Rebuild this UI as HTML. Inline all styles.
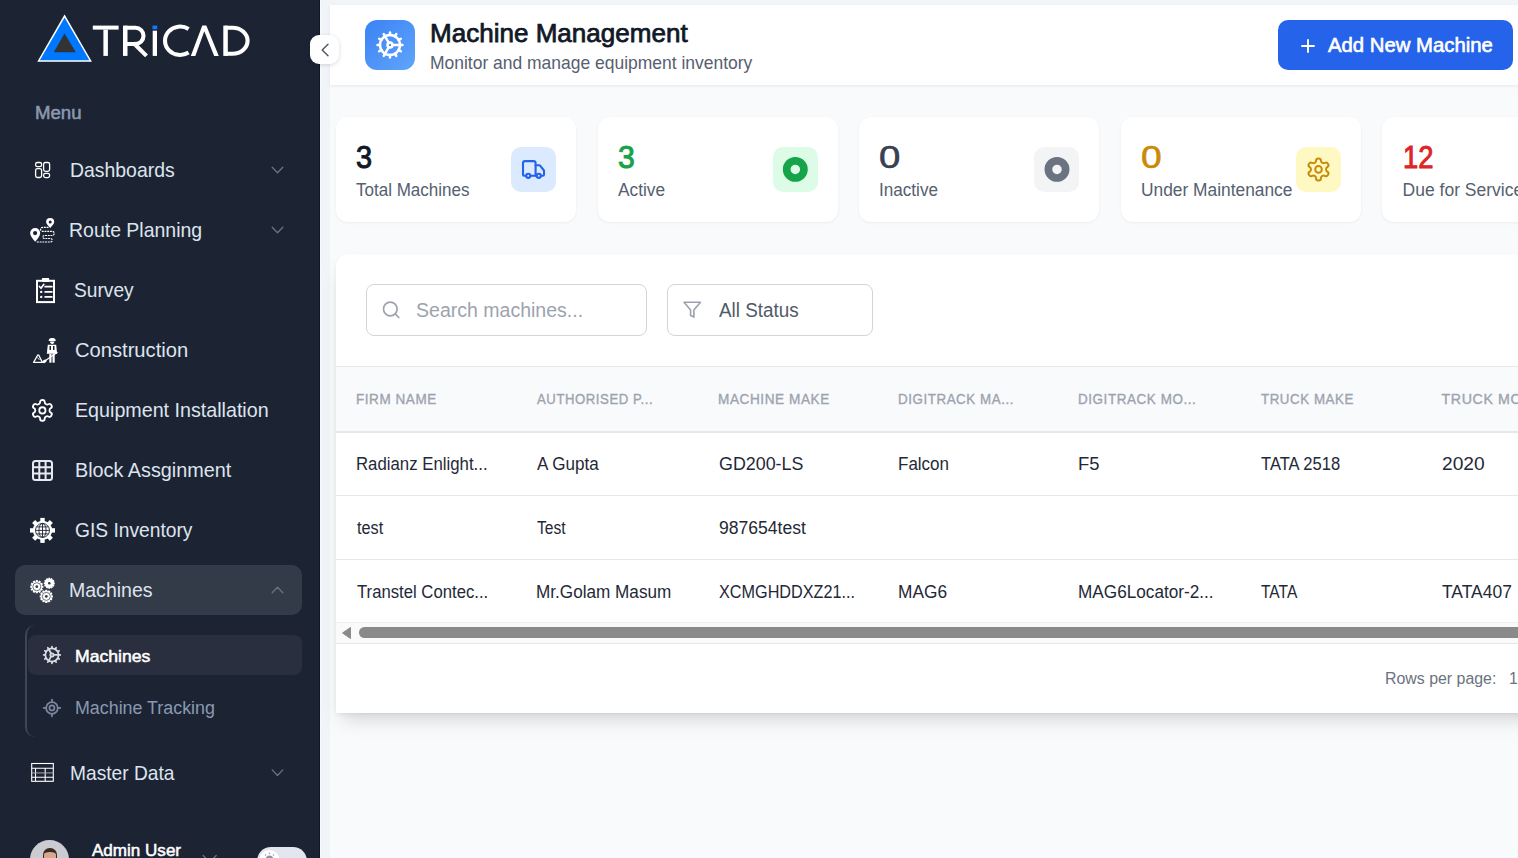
<!DOCTYPE html>
<html><head><meta charset="utf-8"><style>
html,body{margin:0;padding:0;width:1518px;height:858px;overflow:hidden;background:#F1F5F9;font-family:"Liberation Sans",sans-serif}
.t{position:absolute;white-space:nowrap;line-height:1;transform-origin:0 0}
#sb{position:absolute;left:0;top:0;width:320px;height:858px;background:#1C2434;overflow:hidden;box-shadow:inset -1px 0 0 #111827}
#main{position:absolute;left:330px;top:5px;width:1200px;height:900px;background:#f8fafc}
#hdr{position:absolute;left:330px;top:5px;width:1200px;height:80px;background:#fff;box-shadow:0 1px 3px rgba(0,0,0,.08)}
.card{position:absolute;background:#fff;border-radius:12px;box-shadow:0 1px 3px rgba(0,0,0,.06)}
</style></head><body>
<div id="sb">
<svg style="position:absolute;left:0;top:0" width="320" height="80" viewBox="0 0 320 80">
<polygon points="64.6,16 38.6,60.9 90.6,60.9" fill="#0077ff" stroke="#fff" stroke-width="1.5" stroke-linejoin="miter"/>
<polygon points="64.5,33.4 53.8,52.3 75.8,52.3" fill="#333"/>
<g fill="#fff">
<rect x="92.8" y="25.6" width="25.8" height="4"/>
<rect x="103.4" y="29.6" width="4.5" height="26.3"/>
<rect x="123" y="25.6" width="4.5" height="30.3"/>
<rect x="152.7" y="30.7" width="4.3" height="25.2"/>
<rect x="223.3" y="25.6" width="4.5" height="30.3"/>
</g>
<rect x="152.5" y="25.6" width="4.7" height="3.6" fill="#0a7cff"/>
<g fill="none" stroke="#fff" stroke-width="4.1">
<path d="M125,27.75 H135.5 A8,8.1 0 0 1 135.5,43.95 H125"/>
<path d="M133.5,43 L146.5,55.9"/>
<path d="M188.6,28.9 A15.2,14.2 0 1 0 188.6,52.6"/>
<path d="M225,27.75 H232.5 A15,12.95 0 0 1 232.5,53.75 H225"/>
</g>
<polygon points="190.8,55.9 202.3,25.6 206.3,25.6 218.8,55.9 214.2,55.9 204.3,31.2 195.3,55.9" fill="#fff"/>
</svg>
<div id="t0" class="t" style="left:34.55px;top:105.00px;font-size:17.5px;color:#8A99AF;font-weight:400;-webkit-text-stroke:0.53px #8A99AF;transform:scaleX(1.0636);">Menu</div>
<div style="position:absolute;left:15px;top:565px;width:287px;height:50px;border-radius:10px;background:#333A48"></div>
<div style="position:absolute;left:25px;top:625px;width:12px;height:112px;border-left:2px solid #3f4656;border-radius:10px 0 0 10px"></div>
<div style="position:absolute;left:28px;top:635px;width:274px;height:40px;border-radius:8px;background:#292F3E"></div>
<div id="t1" class="t" style="left:69.64px;top:160.01px;font-size:20.3px;color:#DEE4EE;font-weight:400;transform:scaleX(0.9569);">Dashboards</div>
<div id="t2" class="t" style="left:69.14px;top:220.11px;font-size:20.3px;color:#DEE4EE;font-weight:400;transform:scaleX(0.9600);">Route Planning</div>
<div id="t3" class="t" style="left:73.83px;top:280.21px;font-size:20.3px;color:#DEE4EE;font-weight:400;transform:scaleX(0.9443);">Survey</div>
<div id="t4" class="t" style="left:74.80px;top:340.01px;font-size:20.3px;color:#DEE4EE;font-weight:400;transform:scaleX(0.9937);">Construction</div>
<div id="t5" class="t" style="left:74.63px;top:399.81px;font-size:20.3px;color:#DEE4EE;font-weight:400;transform:scaleX(0.9702);">Equipment Installation</div>
<div id="t6" class="t" style="left:74.62px;top:459.81px;font-size:20.3px;color:#DEE4EE;font-weight:400;transform:scaleX(0.9764);">Block Assginment</div>
<div id="t7" class="t" style="left:75.00px;top:520.11px;font-size:20.3px;color:#DEE4EE;font-weight:400;transform:scaleX(0.9468);">GIS Inventory</div>
<div id="t8" class="t" style="left:69.48px;top:580.01px;font-size:20.3px;color:#DEE4EE;font-weight:400;transform:scaleX(0.9627);">Machines</div>
<div id="t9" class="t" style="left:70.05px;top:763.21px;font-size:20.3px;color:#DEE4EE;font-weight:400;transform:scaleX(0.9455);">Master Data</div>
<div id="t10" class="t" style="left:74.62px;top:647.80px;font-size:17px;color:#ffffff;font-weight:400;-webkit-text-stroke:0.51px #ffffff;transform:scaleX(1.0365);">Machines</div>
<div id="t11" class="t" style="left:74.59px;top:700.01px;font-size:17.6px;color:#8A99AF;font-weight:400;transform:scaleX(1.0147);">Machine Tracking</div>
<div id="t12" class="t" style="left:91.64px;top:841.80px;font-size:17px;color:#ffffff;font-weight:400;-webkit-text-stroke:0.51px #ffffff;transform:scaleX(1.0026);">Admin User</div>
<svg style="position:absolute;left:0;top:0" width="320" height="858" viewBox="0 0 320 858"><g fill="none" stroke="#6b7280" stroke-width="1.3" stroke-linecap="round" stroke-linejoin="round"><path d="M272.2,167.2 L277.5,172.8 L282.8,167.2"/><path d="M272.2,227.2 L277.5,232.8 L282.8,227.2"/><path d="M272.2,769.9000000000001 L277.5,775.5 L282.8,769.9000000000001"/><path d="M272.2,592.8 L277.5,587.2 L282.8,592.8"/><path d="M203.2,855.5 L209.7,862.5 L216.2,855.5"/></g></svg>
<svg style="position:absolute;left:0;top:0" width="320" height="858" viewBox="0 0 320 858">
<!-- dashboards -->
<g fill="none" stroke="#fff" stroke-width="1.3">
<rect x="35.6" y="162.5" width="6" height="4.2" rx="1.8"/>
<rect x="35.6" y="168.6" width="6" height="8.9" rx="1.8"/>
<rect x="43.6" y="162.5" width="6" height="8.9" rx="1.8"/>
<rect x="43.6" y="173.4" width="6" height="4.2" rx="1.8"/>
</g>
<!-- route planning -->
<g fill="#fff">
<path d="M35.2,241.8 C33,239 30.1,236 30.1,233 A5.05,5.05 0 0 1 40.2,233 C40.2,236 37.4,239 35.2,241.8 Z"/>
<path d="M50.2,228 C48.6,226 46.1,224 46.1,222 A4.05,4.05 0 0 1 54.2,222 C54.2,224 51.8,226 50.2,228 Z"/>
</g>
<circle cx="35.1" cy="233.1" r="2.1" fill="#1C2434"/>
<circle cx="50.2" cy="222" r="1.5" fill="#1C2434"/>
<path d="M48.5,227.4 H42.6 A2,2 0 0 0 42.6,231.4 H52.6 A2.1,2.1 0 0 1 52.6,235.5 H44.3 A1.5,1.5 0 0 0 44.3,238.5 H50.5 A1.75,1.75 0 0 1 50.5,242 H36" fill="none" stroke="#fff" stroke-width="1.15" stroke-dasharray="1.9 0.8"/>
<!-- survey clipboard -->
<g fill="none" stroke="#fff">
<rect x="37" y="280.8" width="17" height="21.3" stroke-width="2"/>
<path d="M39.4,286.4 L41,288.3 L43.9,284.3" stroke-width="1.6" stroke-linecap="round" stroke-linejoin="round"/>
<path d="M45.2,286.7 H51.8 M45.2,291.9 H51.8 M45.2,296.9 H51.8" stroke-width="1.8" stroke-linecap="round"/>
</g>
<rect x="41.9" y="277.9" width="7.3" height="4" rx="0.8" fill="#fff"/>
<circle cx="41.2" cy="291.9" r="1.2" fill="#fff"/><circle cx="41.2" cy="296.9" r="1.2" fill="#fff"/>
<!-- construction -->
<g fill="#fff">
<path d="M48.7,341.1 H55.7 V340.2 C55.5,338.6 54,338 52.2,338 C50.4,338 48.9,338.6 48.7,340.2 Z"/>
<path d="M50,341.5 H54.4 C54.4,343 53.4,344 52.2,344 C51,344 50,343 50,341.5 Z"/>
<path d="M47.8,344.8 H56.2 L57.1,353.8 H46.8 Z"/>
<rect x="49.3" y="353.8" width="2.2" height="8.9"/><rect x="52.5" y="353.8" width="2.2" height="8.9"/>
</g>
<rect x="49.5" y="346" width="1.5" height="4" fill="#1C2434"/><rect x="53" y="346" width="1.5" height="4" fill="#1C2434"/>
<path d="M57.5,352.3 L45.5,360.5" stroke="#fff" stroke-width="1.2"/>
<ellipse cx="44.6" cy="361.3" rx="2.2" ry="1.5" transform="rotate(-35 44.6 361.3)" fill="#fff"/>
<path d="M33.6,362.4 L37.6,355.2 Q38.2,354.6 38.8,355.2 L42.4,362.4 Z" fill="none" stroke="#fff" stroke-width="1.3" stroke-linejoin="round"/><path d="M37.5,357.5 L39.5,360" stroke="#fff" stroke-width="0.8"/>
<!-- equipment (lucide settings) -->
<g transform="translate(29.9,397.9) scale(1.04)" fill="none" stroke="#fff" stroke-width="1.75" stroke-linecap="round" stroke-linejoin="round">
<path d="M12.22 2h-.44a2 2 0 0 0-2 2v.18a2 2 0 0 1-1 1.73l-.43.25a2 2 0 0 1-2 0l-.15-.08a2 2 0 0 0-2.73.73l-.22.38a2 2 0 0 0 .73 2.73l.15.1a2 2 0 0 1 1 1.72v.51a2 2 0 0 1-1 1.74l-.15.09a2 2 0 0 0-.73 2.73l.22.38a2 2 0 0 0 2.73.73l.15-.08a2 2 0 0 1 2 0l.43.25a2 2 0 0 1 1 1.73V20a2 2 0 0 0 2 2h.44a2 2 0 0 0 2-2v-.18a2 2 0 0 1 1-1.73l.43-.25a2 2 0 0 1 2 0l.15.08a2 2 0 0 0 2.73-.73l.22-.39a2 2 0 0 0-.73-2.73l-.15-.08a2 2 0 0 1-1-1.74v-.5a2 2 0 0 1 1-1.74l.15-.09a2 2 0 0 0 .73-2.73l-.22-.38a2 2 0 0 0-2.73-.73l-.15.08a2 2 0 0 1-2 0l-.43-.25a2 2 0 0 1-1-1.73V4a2 2 0 0 0-2-2z"/>
<circle cx="12" cy="12" r="3"/>
</g>
<!-- block grid -->
<g fill="none" stroke="#e5e9f2" stroke-width="2">
<rect x="33" y="461" width="19" height="19" rx="2.5"/>
<path d="M39.3,461 V480 M45.6,461 V480 M33,467.3 H52 M33,473.6 H52"/>
</g>
<!-- GIS gear globe -->
<g transform="translate(42.5,530.4)">
<g fill="#fff">
<circle r="9.6"/>
<rect x="-2.2" y="-12.5" width="4.4" height="25"/>
<rect x="-12.5" y="-2.2" width="25" height="4.4"/>
<rect x="-2.2" y="-12.5" width="4.4" height="25" transform="rotate(45)"/>
<rect x="-2.2" y="-12.5" width="4.4" height="25" transform="rotate(-45)"/>
</g>
<g fill="none" stroke="#1C2434" stroke-width="0.9">
<circle r="7"/>
<path d="M0,-7 V7 M-7,0 H7 M-6,-3.5 H6 M-6,3.5 H6"/>
<ellipse rx="3.6" ry="7"/>
</g>
</g>
<!-- machines three gears -->
<g fill="#fff">
<g transform="translate(36.8,586.7)">
<circle r="5.3"/>
<path d="M-1,-6.6 H1 L1.2,-4 H-1.2Z M-1,6.6 H1 L1.2,4 H-1.2Z M-6.6,-1 V1 L-4,1.2 V-1.2Z M6.6,-1 V1 L4,1.2 V-1.2Z"/>
<path d="M-1,-6.6 H1 L1.2,-4 H-1.2Z M-1,6.6 H1 L1.2,4 H-1.2Z M-6.6,-1 V1 L-4,1.2 V-1.2Z M6.6,-1 V1 L4,1.2 V-1.2Z" transform="rotate(30)"/>
<path d="M-1,-6.6 H1 L1.2,-4 H-1.2Z M-1,6.6 H1 L1.2,4 H-1.2Z M-6.6,-1 V1 L-4,1.2 V-1.2Z M6.6,-1 V1 L4,1.2 V-1.2Z" transform="rotate(60)"/>
</g>
<g transform="translate(49.3,583.3)">
<circle r="4.5"/>
<path d="M-0.9,-5.5 H0.9 L1.1,-3.5 H-1.1Z M-0.9,5.5 H0.9 L1.1,3.5 H-1.1Z M-5.5,-0.9 V0.9 L-3.5,1.1 V-1.1Z M5.5,-0.9 V0.9 L3.5,1.1 V-1.1Z"/>
<path d="M-0.9,-5.5 H0.9 L1.1,-3.5 H-1.1Z M-0.9,5.5 H0.9 L1.1,3.5 H-1.1Z M-5.5,-0.9 V0.9 L-3.5,1.1 V-1.1Z M5.5,-0.9 V0.9 L3.5,1.1 V-1.1Z" transform="rotate(30)"/>
<path d="M-0.9,-5.5 H0.9 L1.1,-3.5 H-1.1Z M-0.9,5.5 H0.9 L1.1,3.5 H-1.1Z M-5.5,-0.9 V0.9 L-3.5,1.1 V-1.1Z M5.5,-0.9 V0.9 L3.5,1.1 V-1.1Z" transform="rotate(60)"/>
</g>
<g transform="translate(46.3,596.4)">
<circle r="5.3"/>
<path d="M-1,-6.6 H1 L1.2,-4 H-1.2Z M-1,6.6 H1 L1.2,4 H-1.2Z M-6.6,-1 V1 L-4,1.2 V-1.2Z M6.6,-1 V1 L4,1.2 V-1.2Z"/>
<path d="M-1,-6.6 H1 L1.2,-4 H-1.2Z M-1,6.6 H1 L1.2,4 H-1.2Z M-6.6,-1 V1 L-4,1.2 V-1.2Z M6.6,-1 V1 L4,1.2 V-1.2Z" transform="rotate(30)"/>
<path d="M-1,-6.6 H1 L1.2,-4 H-1.2Z M-1,6.6 H1 L1.2,4 H-1.2Z M-6.6,-1 V1 L-4,1.2 V-1.2Z M6.6,-1 V1 L4,1.2 V-1.2Z" transform="rotate(60)"/>
</g>
</g>
<g fill="none" stroke="#333A48" stroke-width="0.7"><circle cx="36.8" cy="586.7" r="4"/><circle cx="46.3" cy="596.4" r="4"/></g>
<g fill="#333A48"><circle cx="36.8" cy="586.7" r="1.4"/><circle cx="46.3" cy="596.4" r="1.4"/><circle cx="49.3" cy="583.3" r="1.3"/></g>
<!-- sub machines cog -->
<g transform="translate(42.0,645.0) scale(0.83)" fill="none" stroke="#d9dce3" stroke-width="2.1" stroke-linecap="round" stroke-linejoin="round">
<path d="M12 20a8 8 0 1 0 0-16 8 8 0 0 0 0 16Z"/><path d="M12 14a2 2 0 1 0 0-4 2 2 0 0 0 0 4Z"/><path d="M12 2v2"/><path d="M12 22v-2"/><path d="m17 20.66-1-1.73"/><path d="M11 10.27 7 3.34"/><path d="m20.66 17-1.73-1"/><path d="m3.34 7 1.73 1"/><path d="M14 12h8"/><path d="M2 12h2"/><path d="m20.66 7-1.73 1"/><path d="m3.34 17 1.73-1"/><path d="m17 3.34-1 1.73"/><path d="m11 13.73-4 6.93"/>
</g>
<!-- machine tracking locate -->
<g transform="translate(42.0,698.0) scale(0.83)" fill="none" stroke="#7b879e" stroke-width="2.1" stroke-linecap="round" stroke-linejoin="round">
<line x1="2" x2="5" y1="12" y2="12"/><line x1="19" x2="22" y1="12" y2="12"/><line x1="12" x2="12" y1="2" y2="5"/><line x1="12" x2="12" y1="19" y2="22"/><circle cx="12" cy="12" r="7"/><circle cx="12" cy="12" r="3"/>
</g>
<!-- master data table -->
<g fill="none" stroke="#fff" stroke-width="1.1">
<rect x="31.7" y="763.5" width="21.6" height="17.8"/>
<path d="M31.7,768.2 H53.3 M31.7,777.3 H53.3 M35.5,768.2 V781.3 M45.2,768.2 V781.3"/>
<path d="M31.7,772.9 H53.3" stroke="#9ca3af"/>
</g>
</svg>
<div style="position:absolute;left:30px;top:840px;width:39px;height:39px;border-radius:50%;background:#cbccd1;overflow:hidden"><div style="position:absolute;left:13.5px;top:8.5px;width:13px;height:20px;border-radius:6.5px 6.5px 5px 5px;background:#d5a88f"></div><div style="position:absolute;left:13.3px;top:8.3px;width:13.4px;height:12px;border-radius:6.7px 6.7px 0 0;border:1.3px solid #3a2a22;border-bottom:none;box-sizing:border-box;border-top-width:4px"></div></div>
<div style="position:absolute;left:257px;top:847px;width:50px;height:28px;border-radius:14px;background:#e2e6ee"><div style="position:absolute;left:1.5px;top:3px;width:21px;height:21px;border-radius:50%;background:#fff;box-shadow:0 1px 2px rgba(0,0,0,.12)"></div><svg style="position:absolute;left:0;top:0" width="28" height="28" viewBox="0 0 28 28"><circle cx="12.5" cy="12" r="3.6" fill="#8e949e"/><g fill="#9ca3af"><circle cx="12.5" cy="6.4" r="0.8"/><circle cx="8.5" cy="8" r="0.8"/><circle cx="16.5" cy="8" r="0.8"/><circle cx="6.9" cy="12" r="0.8"/><circle cx="18.1" cy="12" r="0.8"/></g></svg></div>
</div>
<div id="main"></div>
<div style="position:absolute;left:320px;top:0;width:1px;height:858px;background:#f7f9fb"></div>
<div id="hdr"></div>
<div style="position:absolute;left:310px;top:35px;width:29px;height:29px;border-radius:9px;background:#fff;box-shadow:0 1px 4px rgba(0,0,0,.15)"><svg width="29" height="29" viewBox="0 0 29 29"><path d="M18,9.2 L12.2,15 L18,20.8" fill="none" stroke="#4b5563" stroke-width="1.4" stroke-linecap="round" stroke-linejoin="round"/></svg></div>
<div style="position:absolute;left:365px;top:20px;width:50px;height:50px;border-radius:12px;background:linear-gradient(135deg,#3b82f6,#60a5fa)"></div>
<div id="t13" class="t" style="left:429.96px;top:20.60px;font-size:25px;color:#111827;font-weight:400;-webkit-text-stroke:0.75px #111827;transform:scaleX(1.0415);">Machine Management</div>
<div id="t14" class="t" style="left:430.02px;top:54.90px;font-size:17.8px;color:#566070;font-weight:400;transform:scaleX(0.9821);">Monitor and manage equipment inventory</div>
<div style="position:absolute;left:1278px;top:20px;width:235px;height:50px;border-radius:10px;background:#2563eb"></div>
<svg style="position:absolute;left:1299px;top:36.5px" width="18" height="18" viewBox="0 0 18 18"><path d="M9,3 V15 M3,9 H15" stroke="#fff" stroke-width="1.9" stroke-linecap="round"/></svg>
<div id="t15" class="t" style="left:1328.00px;top:35.31px;font-size:20px;color:#ffffff;font-weight:400;-webkit-text-stroke:0.60px #ffffff;transform:scaleX(1.0155);">Add New Machine</div>
<div class="card" style="left:336.00px;top:117px;width:240px;height:105px"></div>
<div id="t16" class="t" style="left:356.45px;top:141.00px;font-size:32px;color:#111827;font-weight:400;-webkit-text-stroke:0.96px #111827;transform:scaleX(0.9023);-webkit-text-stroke:1.0px #111827">3</div>
<div id="t17" class="t" style="left:356.39px;top:182.00px;font-size:17.5px;color:#556070;font-weight:400;transform:scaleX(0.9726);">Total Machines</div>
<div style="position:absolute;left:511.00px;top:147px;width:45px;height:45px;border-radius:10px;background:#dbeafe"></div>
<div class="card" style="left:597.60px;top:117px;width:240px;height:105px"></div>
<div id="t18" class="t" style="left:617.93px;top:141.00px;font-size:32px;color:#16a34a;font-weight:400;-webkit-text-stroke:0.96px #16a34a;transform:scaleX(0.9448);-webkit-text-stroke:1.0px #16a34a">3</div>
<div id="t19" class="t" style="left:618.00px;top:182.00px;font-size:17.5px;color:#556070;font-weight:400;transform:scaleX(0.9879);">Active</div>
<div style="position:absolute;left:772.60px;top:147px;width:45px;height:45px;border-radius:10px;background:#dcfce7"></div>
<div class="card" style="left:859.20px;top:117px;width:240px;height:105px"></div>
<div id="t20" class="t" style="left:878.66px;top:141.00px;font-size:32px;color:#374151;font-weight:400;-webkit-text-stroke:0.96px #374151;transform:scaleX(1.1990);-webkit-text-stroke:0.6px #374151">0</div>
<div id="t21" class="t" style="left:879.24px;top:182.00px;font-size:17.5px;color:#556070;font-weight:400;transform:scaleX(0.9783);">Inactive</div>
<div style="position:absolute;left:1034.20px;top:147px;width:45px;height:45px;border-radius:10px;background:#f3f4f6"></div>
<div class="card" style="left:1120.80px;top:117px;width:240px;height:105px"></div>
<div id="t22" class="t" style="left:1141.14px;top:141.00px;font-size:32px;color:#ca8a04;font-weight:400;-webkit-text-stroke:0.96px #ca8a04;transform:scaleX(1.1620);-webkit-text-stroke:0.6px #ca8a04">0</div>
<div id="t23" class="t" style="left:1141.43px;top:182.00px;font-size:17.5px;color:#556070;font-weight:400;transform:scaleX(0.9915);">Under Maintenance</div>
<div style="position:absolute;left:1295.80px;top:147px;width:45px;height:45px;border-radius:10px;background:#fef9c3"></div>
<div class="card" style="left:1382.40px;top:117px;width:240px;height:105px"></div>
<div id="t24" class="t" style="left:1402.80px;top:141.00px;font-size:32px;color:#dc2626;font-weight:400;-webkit-text-stroke:0.96px #dc2626;transform:scaleX(0.8566);-webkit-text-stroke:1.0px #dc2626">12</div>
<div id="t25" class="t" style="left:1402.60px;top:182.00px;font-size:17.5px;color:#556070;font-weight:400;">Due for Service</div>
<div style="position:absolute;left:1557.40px;top:147px;width:45px;height:45px;border-radius:10px;background:#fee2e2"></div>
<div class="card" style="left:336px;top:253.5px;width:1400px;height:459px;border-radius:12px 12px 0 0;box-shadow:0 12px 20px -6px rgba(0,0,0,.15),0 3px 5px -1px rgba(0,0,0,.05),0 0 2px rgba(0,0,0,.05)"></div>
<div style="position:absolute;left:366px;top:284px;width:279px;height:50px;border:1px solid #d1d5db;border-radius:8px"></div>
<div style="position:absolute;left:667px;top:284px;width:204px;height:50px;border:1px solid #d1d5db;border-radius:8px"></div>
<div id="t26" class="t" style="left:415.62px;top:300.40px;font-size:20px;color:#9ca3af;font-weight:400;transform:scaleX(0.9762);">Search machines...</div>
<div id="t27" class="t" style="left:718.59px;top:300.21px;font-size:20px;color:#515a67;font-weight:400;transform:scaleX(0.9421);">All Status</div>
<div style="position:absolute;left:336px;top:366px;width:1200px;height:64px;background:#f9fafb;border-top:1px solid #e5e7eb;border-bottom:2px solid #e5e7eb"></div>
<div id="t28" class="t" style="left:355.82px;top:392.40px;font-size:14.2px;color:#9ca3af;font-weight:400;transform:scaleX(0.9502);-webkit-text-stroke:0.35px #9ca3af;letter-spacing:0.6px">FIRM NAME</div>
<div id="t29" class="t" style="left:537.24px;top:392.40px;font-size:14.2px;color:#9ca3af;font-weight:400;transform:scaleX(0.9269);-webkit-text-stroke:0.35px #9ca3af;letter-spacing:0.6px">AUTHORISED P...</div>
<div id="t30" class="t" style="left:717.65px;top:392.40px;font-size:14.2px;color:#9ca3af;font-weight:400;transform:scaleX(0.9578);-webkit-text-stroke:0.35px #9ca3af;letter-spacing:0.6px">MACHINE MAKE</div>
<div id="t31" class="t" style="left:898.08px;top:392.40px;font-size:14.2px;color:#9ca3af;font-weight:400;transform:scaleX(0.9414);-webkit-text-stroke:0.35px #9ca3af;letter-spacing:0.6px">DIGITRACK MA...</div>
<div id="t32" class="t" style="left:1078.43px;top:392.40px;font-size:14.2px;color:#9ca3af;font-weight:400;transform:scaleX(0.9478);-webkit-text-stroke:0.35px #9ca3af;letter-spacing:0.6px">DIGITRACK MO...</div>
<div id="t33" class="t" style="left:1260.96px;top:392.40px;font-size:14.2px;color:#9ca3af;font-weight:400;transform:scaleX(0.9378);-webkit-text-stroke:0.35px #9ca3af;letter-spacing:0.6px">TRUCK MAKE</div>
<div id="t34" class="t" style="left:1441.60px;top:392.40px;font-size:14.2px;color:#9ca3af;font-weight:400;-webkit-text-stroke:0.35px #9ca3af;letter-spacing:0.6px">TRUCK MODEL</div>
<div id="t35" class="t" style="left:355.83px;top:455.61px;font-size:17.5px;color:#1f2937;font-weight:400;transform:scaleX(0.9592);">Radianz Enlight...</div>
<div id="t36" class="t" style="left:537.19px;top:455.61px;font-size:17.5px;color:#1f2937;font-weight:400;transform:scaleX(0.9750);">A Gupta</div>
<div id="t37" class="t" style="left:718.58px;top:455.61px;font-size:17.5px;color:#1f2937;font-weight:400;transform:scaleX(1.0199);">GD200-LS</div>
<div id="t38" class="t" style="left:898.03px;top:455.61px;font-size:17.5px;color:#1f2937;font-weight:400;transform:scaleX(0.9714);">Falcon</div>
<div id="t39" class="t" style="left:1078.34px;top:455.61px;font-size:17.5px;color:#1f2937;font-weight:400;transform:scaleX(1.0521);">F5</div>
<div id="t40" class="t" style="left:1260.97px;top:455.61px;font-size:17.5px;color:#1f2937;font-weight:400;transform:scaleX(0.9465);">TATA 2518</div>
<div id="t41" class="t" style="left:1441.50px;top:455.61px;font-size:17.5px;color:#1f2937;font-weight:400;transform:scaleX(1.0965);">2020</div>
<div id="t42" class="t" style="left:356.75px;top:519.61px;font-size:17.5px;color:#1f2937;font-weight:400;transform:scaleX(0.9264);">test</div>
<div id="t43" class="t" style="left:537.12px;top:519.61px;font-size:17.5px;color:#1f2937;font-weight:400;transform:scaleX(0.8918);">Test</div>
<div id="t44" class="t" style="left:718.58px;top:519.61px;font-size:17.5px;color:#1f2937;font-weight:400;transform:scaleX(1.0026);">987654test</div>
<div id="t45" class="t" style="left:356.77px;top:583.61px;font-size:17.5px;color:#1f2937;font-weight:400;transform:scaleX(0.9544);">Transtel Contec...</div>
<div id="t46" class="t" style="left:536.17px;top:583.61px;font-size:17.5px;color:#1f2937;font-weight:400;transform:scaleX(0.9799);">Mr.Golam Masum</div>
<div id="t47" class="t" style="left:718.58px;top:583.61px;font-size:17.5px;color:#1f2937;font-weight:400;transform:scaleX(0.9266);">XCMGHDDXZ21...</div>
<div id="t48" class="t" style="left:898.08px;top:583.61px;font-size:17.5px;color:#1f2937;font-weight:400;transform:scaleX(0.9884);">MAG6</div>
<div id="t49" class="t" style="left:1078.42px;top:583.61px;font-size:17.5px;color:#1f2937;font-weight:400;transform:scaleX(0.9816);">MAG6Locator-2...</div>
<div id="t50" class="t" style="left:1260.95px;top:583.61px;font-size:17.5px;color:#1f2937;font-weight:400;transform:scaleX(0.8891);">TATA</div>
<div id="t51" class="t" style="left:1441.60px;top:583.61px;font-size:17.5px;color:#1f2937;font-weight:400;transform:scaleX(0.9974);">TATA407</div>
<div style="position:absolute;left:336px;top:495px;width:1200px;height:1px;background:#e5e7eb"></div>
<div style="position:absolute;left:336px;top:559px;width:1200px;height:1px;background:#e5e7eb"></div>
<div style="position:absolute;left:336px;top:622px;width:1200px;height:20px;background:#fafafa;border-top:1px solid #f1f1f1;border-bottom:1px solid #e5e7eb"></div>
<div style="position:absolute;left:359px;top:627px;width:1200px;height:11px;border-radius:6px;background:#8a8a8a"></div>
<svg style="position:absolute;left:340px;top:625px" width="14" height="16" viewBox="0 0 14 16"><path d="M2.5,8 L10.5,2.5 V13.5 Z" fill="#8a8a8a" stroke="#8a8a8a" stroke-width="1" stroke-linejoin="round"/></svg>
<div id="t52" class="t" style="left:1384.61px;top:671.00px;font-size:15.8px;color:#6b7280;font-weight:400;transform:scaleX(1.0061);">Rows per page:</div>
<div id="t53" class="t" style="left:1509.00px;top:671.00px;font-size:15.8px;color:#6b7280;font-weight:400;">10</div>
<svg style="position:absolute;left:0;top:0" width="1518" height="858" viewBox="0 0 1518 858"><g fill="none" stroke-linecap="round" stroke-linejoin="round"><g transform="translate(375,30) scale(1.25)" stroke="#fff" stroke-width="2"><path d="M12 20a8 8 0 1 0 0-16 8 8 0 0 0 0 16Z"/><path d="M12 14a2 2 0 1 0 0-4 2 2 0 0 0 0 4Z"/><path d="M12 2v2"/><path d="M12 22v-2"/><path d="m17 20.66-1-1.73"/><path d="M11 10.27 7 3.34"/><path d="m20.66 17-1.73-1"/><path d="m3.34 7 1.73 1"/><path d="M14 12h8"/><path d="M2 12h2"/><path d="m20.66 7-1.73 1"/><path d="m3.34 17 1.73-1"/><path d="m17 3.34-1 1.73"/><path d="m11 13.73-4 6.93"/></g><g transform="translate(520.9,156.9) scale(1.05)" stroke="#2563eb" stroke-width="2"><path d="M14 18V6a2 2 0 0 0-2-2H4a2 2 0 0 0-2 2v11a1 1 0 0 0 1 1h2"/><path d="M15 18H9"/><path d="M19 18h2a1 1 0 0 0 1-1v-3.65a1 1 0 0 0-.22-.624l-3.48-4.35A1 1 0 0 0 17.52 8H14"/><circle cx="17" cy="18" r="2"/><circle cx="7" cy="18" r="2"/></g><circle cx="795.3" cy="169.4" r="8.6" stroke="#16a34a" stroke-width="7.7"/><circle cx="1057" cy="169.4" r="8.6" stroke="#6b7280" stroke-width="7.7"/><g transform="translate(1305.3,156.2) scale(1.1)" stroke="#ca8a04" stroke-width="1.8"><path d="M12.22 2h-.44a2 2 0 0 0-2 2v.18a2 2 0 0 1-1 1.73l-.43.25a2 2 0 0 1-2 0l-.15-.08a2 2 0 0 0-2.73.73l-.22.38a2 2 0 0 0 .73 2.73l.15.1a2 2 0 0 1 1 1.72v.51a2 2 0 0 1-1 1.74l-.15.09a2 2 0 0 0-.73 2.73l.22.38a2 2 0 0 0 2.73.73l.15-.08a2 2 0 0 1 2 0l.43.25a2 2 0 0 1 1 1.73V20a2 2 0 0 0 2 2h.44a2 2 0 0 0 2-2v-.18a2 2 0 0 1 1-1.73l.43-.25a2 2 0 0 1 2 0l.15.08a2 2 0 0 0 2.73-.73l.22-.39a2 2 0 0 0-.73-2.73l-.15-.08a2 2 0 0 1-1-1.74v-.5a2 2 0 0 1 1-1.74l.15-.09a2 2 0 0 0 .73-2.73l-.22-.38a2 2 0 0 0-2.73-.73l-.15.08a2 2 0 0 1-2 0l-.43-.25a2 2 0 0 1-1-1.73V4a2 2 0 0 0-2-2z"/><circle cx="12" cy="12" r="3"/></g><g transform="translate(380.95,299.65) scale(0.85)" stroke="#9ca3af" stroke-width="2"><circle cx="11" cy="11" r="8"/><path d="m21 21-4.3-4.3"/></g><g transform="translate(682.4,299.84) scale(0.82)" stroke="#9ca3af" stroke-width="2"><polygon points="22 3 2 3 10 12.46 10 19 14 21 14 12.46 22 3"/></g></g></svg>

</body></html>
